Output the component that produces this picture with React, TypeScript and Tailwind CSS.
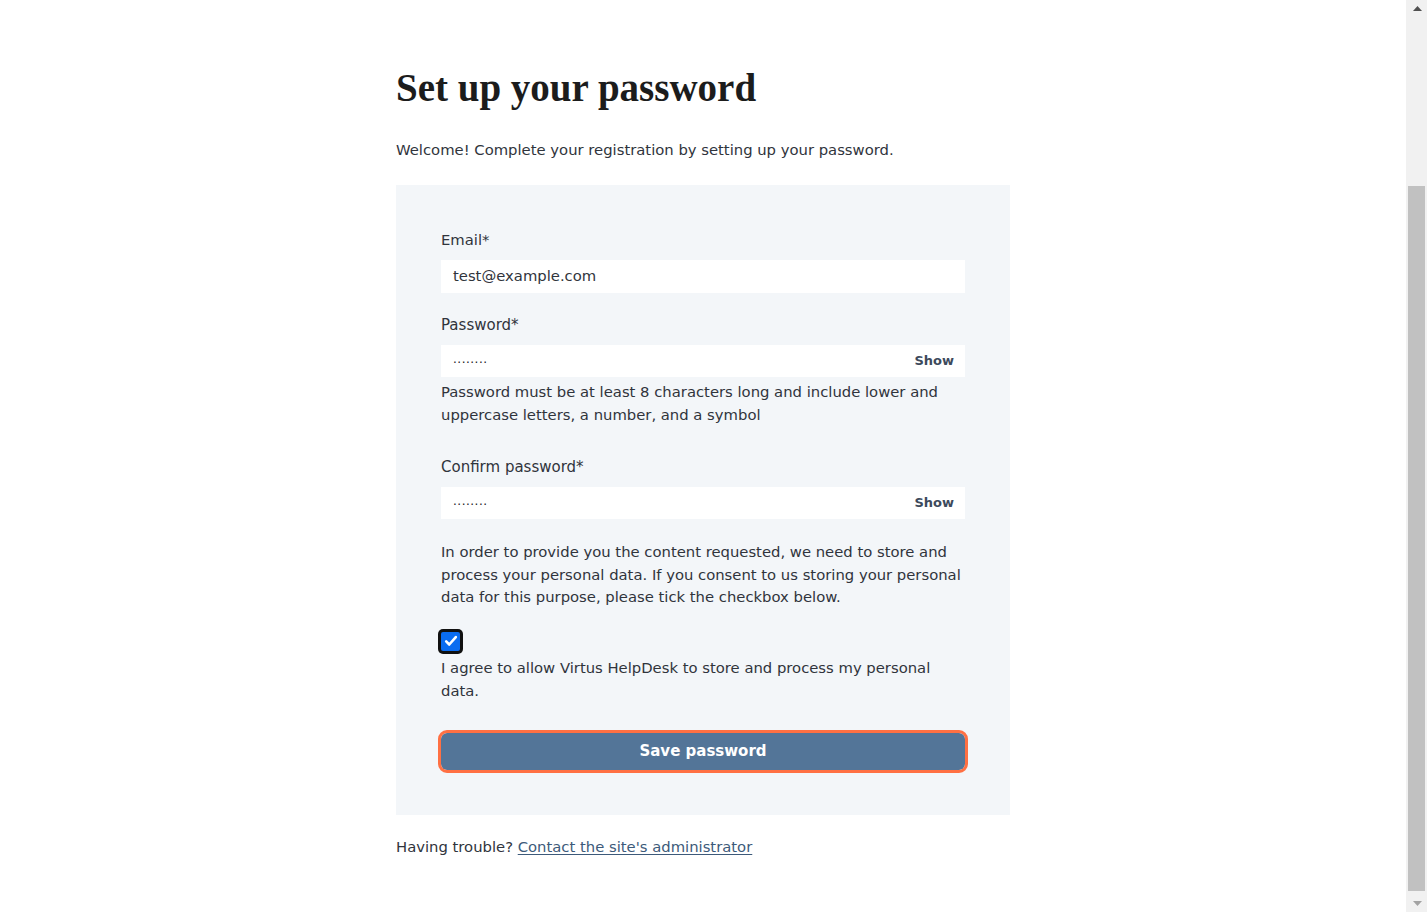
const body = { fontFamily: '"DejaVu Sans", "Noto Sans", sans-serif' };

const PasswordField = ({ label }: { label: string }) => (
  <div className="flex flex-col">
    <label className="text-[15px] leading-6">{label}</label>
    <div className="mt-2 flex h-8 items-center justify-between bg-white pl-3 pr-[11px]">
      <span className="translate-y-[2px] text-[12px] tracking-[0.5px] text-[#222]">········</span>
      <button type="button" className="text-[13px] font-bold text-[#3d4a5c]">
        Show
      </button>
    </div>
  </div>
);

// browser scrollbar as it shows in the screenshot (page scrolled to the bottom)
const Scrollbar = () => (
  <div className="flex w-[21px] shrink-0 flex-col bg-[#f1f1f1]">
    <div className="flex h-[17px] items-center justify-center pl-[2px]">
      <svg width="9" height="5" viewBox="0 0 9 5">
        <path d="M0 5L4.5 0L9 5Z" fill="#505050" />
      </svg>
    </div>
    <div className="flex-1 pt-[169px] pb-[4px] pl-[2px] pr-[2px]">
      <div className="h-full bg-[#c1c1c1]" />
    </div>
    <div className="flex h-[17px] items-center justify-center pl-[2px]">
      <svg width="9" height="5" viewBox="0 0 9 5">
        <path d="M0 0L9 0L4.5 5Z" fill="#a3a3a3" />
      </svg>
    </div>
  </div>
);

const App = () => {
  return (
    <div className="flex h-screen overflow-hidden bg-white text-[#30343c]" style={body}>
      <main className="flex-1">
        <div className="mx-auto w-[614px] pt-16">
          <h1
            className="text-[39px] font-bold leading-[48px] text-[#1c1c1c]"
            style={{ fontFamily: '"Liberation Serif", "DejaVu Serif", serif' }}
          >
            Set up your password
          </h1>
          <p className="mt-[26px] text-[14.8px] leading-6">
            Welcome! Complete your registration by setting up your password.
          </p>

          <form className="mt-[23px] flex flex-col bg-[#f3f6f9] px-[45px] pt-[43px] pb-[45px] text-[14.8px]">
            <div className="flex flex-col">
              <label className="leading-6">Email*</label>
              <div className="mt-2 flex h-[33px] items-center bg-white px-3">test@example.com</div>
            </div>

            <div className="mt-5">
              <PasswordField label="Password*" />
              <p className="mt-[3px] leading-[23px]">
                Password must be at least 8 characters long and include lower and uppercase letters,
                a number, and a symbol
              </p>
            </div>

            <div className="mt-[29px]">
              <PasswordField label="Confirm password*" />
            </div>

            <p className="mt-[22px] leading-[22.5px]">
              In order to provide you the content requested, we need to store and process your
              personal data. If you consent to us storing your personal data for this purpose,
              please tick the checkbox below.
            </p>

            <div className="mt-[20px] flex">
              <span className="-ml-[3px] flex h-[25px] w-[25px] items-center justify-center rounded-[5px] bg-[#111]">
                <span className="flex h-[19px] w-[19px] items-center justify-center rounded-[2px] bg-[#0a6cf0]">
                  <svg viewBox="0 0 16 16" className="h-[14px] w-[14px]" fill="none" stroke="white" strokeWidth="3" strokeLinecap="round" strokeLinejoin="round">
                    <path d="M2.5 8.5l3.5 3.5L13.5 3.5" />
                  </svg>
                </span>
              </span>
            </div>
            <p className="mt-[2px] leading-[23px]">
              I agree to allow Virtus HelpDesk to store and process my personal data.
            </p>

            <button
              type="button"
              className="mt-[31px] h-[37px] rounded-md bg-[#537598] text-[15px] font-semibold text-white outline-[3px] outline-[#ff7043]"
            >
              Save password
            </button>
          </form>

          <p className="mt-5 text-[14.8px] leading-6">
            Having trouble?{' '}
            <a href="#" className="text-[#3d5a7a] underline underline-offset-2">
              Contact the site's administrator
            </a>
          </p>
        </div>
      </main>
      <Scrollbar />
    </div>
  );
};

export default App;
